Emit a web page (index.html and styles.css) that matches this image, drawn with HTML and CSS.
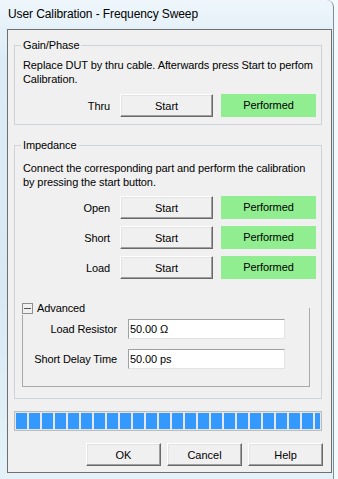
FILE: index.html
```html
<!DOCTYPE html>
<html lang="en">
<head>
    <meta charset="UTF-8">
    <title>User Calibration - Frequency Sweep</title>
    <link rel="stylesheet" href="styles.css">
</head>
<body>
    <div class="window">
        <div class="titlebar">User Calibration - Frequency Sweep</div>

        <div class="client">
            <div class="group group-gain">
                <div class="group-title">Gain/Phase</div>
                <p class="note">Replace DUT by thru cable. Afterwards press Start to perfom<br>Calibration.</p>
                <div class="cal-row">
                    <span class="cal-label">Thru</span>
                    <button class="btn btn-start">Start</button>
                    <span class="status">Performed</span>
                </div>
            </div>

            <div class="group group-impedance">
                <div class="group-title">Impedance</div>
                <p class="note">Connect the corresponding part and perform the calibration<br>by pressing the start button.</p>
                <div class="cal-rows">
                    <div class="cal-row">
                        <span class="cal-label">Open</span>
                        <button class="btn btn-start">Start</button>
                        <span class="status">Performed</span>
                    </div>
                    <div class="cal-row">
                        <span class="cal-label">Short</span>
                        <button class="btn btn-start">Start</button>
                        <span class="status">Performed</span>
                    </div>
                    <div class="cal-row">
                        <span class="cal-label">Load</span>
                        <button class="btn btn-start">Start</button>
                        <span class="status">Performed</span>
                    </div>
                </div>

                <div class="group group-advanced">
                    <div class="group-title advanced-title">
                        <span class="collapse-box"></span>
                        <span>Advanced</span>
                    </div>
                    <div class="field-row">
                        <label class="field-label">Load Resistor</label>
                        <input class="field-input" type="text" value="50.00 Ω">
                    </div>
                    <div class="field-row">
                        <label class="field-label">Short Delay Time</label>
                        <input class="field-input" type="text" value="50.00 ps">
                    </div>
                </div>
            </div>

            <div class="progress">
                <div class="progress-fill"></div>
            </div>

            <div class="dialog-buttons">
                <button class="btn btn-dialog">OK</button>
                <button class="btn btn-dialog">Cancel</button>
                <button class="btn btn-dialog">Help</button>
            </div>
        </div>
    </div>
</body>
</html>
```

FILE: styles.css
```css
* {
    margin: 0;
    padding: 0;
    box-sizing: border-box;
}

body {
    width: 338px;
    height: 479px;
    overflow: hidden;
    background: #f4f9fc;
    font-family: "Liberation Sans", Arial, sans-serif;
    font-size: 11px;
    letter-spacing: -0.1px;
    color: #000;
}

.window {
    width: 334px;
    height: 479px;
    border-right: 1px solid #7d8d9a;
    border-radius: 0 7px 0 0;
    background: linear-gradient(180deg, #eef6fb 0%, #dcecf6 12%, #d8e9f4 60%, #e4f1f8 100%);
}

.titlebar {
    height: 29px;
    padding: 7px 0 0 8px;
    font-size: 12px;
    line-height: 14px;
    color: #000;
}

.client {
    width: 325px;
    height: 444px;
    margin-left: 7px;
    border: 1px solid #6f6f6f;
    background: #f0f0f0;
    padding-top: 15px;
}

/* group boxes */
.group {
    border: 1px solid #cdd4d9;
    padding: 0 4px 0 8px;
}

.group-title {
    display: table;
    margin: -8px 0 0 -2px;
    padding: 0 2px;
    background: #f0f0f0;
    line-height: 14px;
}

.group-gain {
    width: 308px;
    margin-left: 6px;
    padding-bottom: 7px;
}

.group-impedance {
    width: 308px;
    margin: 20px 0 0 6px;
    padding-bottom: 11px;
}

.note {
    line-height: 14px;
    white-space: nowrap;
}

.group-gain .note {
    margin-top: 6px;
}

.group-impedance .note {
    margin-top: 9px;
}

.cal-rows {
    display: flex;
    flex-direction: column;
    gap: 7px;
    margin-top: 7px;
}

.group-gain .cal-row {
    margin-top: 8px;
}

.cal-row {
    display: flex;
    align-items: center;
    height: 23px;
}

.cal-label {
    width: 87px;
    margin-right: 10px;
    text-align: right;
}

.btn {
    font-family: inherit;
    font-size: 11px;
    color: #000;
    background: #f0f0f0;
    border: 1px solid;
    border-color: #ffffff #696969 #696969 #ffffff;
    box-shadow: inset -1px -1px 0 #a0a0a0, inset 1px 1px 0 #e3e3e3;
}

.btn-start {
    width: 93px;
    height: 23px;
}

.status {
    width: 95px;
    height: 23px;
    margin-left: 8px;
    background: #90ee90;
    text-align: center;
    line-height: 23px;
}

/* advanced */
.group-advanced {
    width: 288px;
    margin: 29px 0 0 -1px;
    border-color: #a9a9a9;
    padding: 0 0 17px 0;
}

.advanced-title {
    display: flex;
    align-items: center;
    gap: 4px;
    margin-left: -1px;
    padding: 0 3px 0 0;
}

.collapse-box {
    position: relative;
    width: 11px;
    height: 11px;
    border: 1px solid #8d8d8d;
    background: #f0f0f0;
}

.collapse-box::after {
    content: "";
    position: absolute;
    left: 1px;
    right: 1px;
    top: 4px;
    height: 1px;
    background: #555;
}

.field-row {
    display: flex;
    align-items: center;
    height: 20px;
    margin-top: 10px;
}

.advanced-title + .field-row {
    margin-top: 4px;
}

.field-label {
    width: 94px;
    margin-right: 11px;
    text-align: right;
    white-space: nowrap;
}

.field-input {
    width: 157px;
    height: 20px;
    padding: 0 1px;
    font-family: inherit;
    font-size: 11px;
    letter-spacing: -0.1px;
    color: #000;
    background: #fff;
    border: 1px solid;
    border-color: #a0a0a0 #e3e3e3 #e3e3e3 #a0a0a0;
    outline: none;
}

/* progress */
.progress {
    width: 308px;
    height: 20px;
    margin: 12px 0 0 6px;
    border: 1px solid #bcbcbc;
    background: #e6e6e6;
    padding: 1px;
}

.progress-fill {
    height: 100%;
    background: repeating-linear-gradient(90deg, #3399ff 0 11px, transparent 11px 13px);
}

.dialog-buttons {
    display: flex;
    justify-content: flex-end;
    gap: 6px;
    margin: 12px 8px 0 0;
}

.btn-dialog {
    width: 75px;
    height: 23px;
}
```
